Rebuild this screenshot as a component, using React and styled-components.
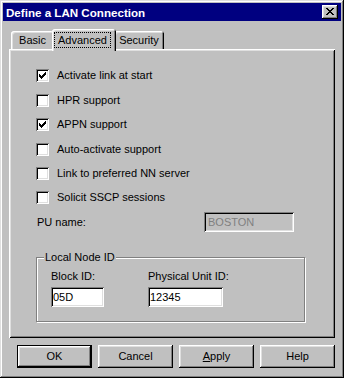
import React from "react";
import styled, { createGlobalStyle } from "styled-components";

const GlobalStyle = createGlobalStyle`
  html, body { margin: 0; padding: 0; background: #c0c0c0; }
  body {
    font-family: "Liberation Sans", Arial, sans-serif;
    font-size: 11px;
    color: #000;
  }
  * { box-sizing: border-box; }
`;

const Win = styled.div`
  width: 344px;
  height: 378px;
  padding: 3px;
  background: #c0c0c0;
  box-shadow: inset -1px -1px #000, inset 1px 1px #dfdfdf,
    inset -2px -2px #808080, inset 2px 2px #fff;
  display: flex;
  flex-direction: column;
`;

const TitleBar = styled.div`
  height: 18px;
  flex-shrink: 0;
  background: #000080;
  display: flex;
  align-items: center;
  padding: 0 3px 0 3px;
`;

const Title = styled.span`
  color: #fff;
  font-weight: bold;
  font-size: 11.6px;
  line-height: 13px;
  white-space: nowrap;
`;

const CloseBtn = styled.div`
  margin-left: auto;
  width: 16px;
  height: 14px;
  background: #c0c0c0;
  box-shadow: inset -1px -1px #000, inset 1px 1px #fff,
    inset -2px -2px #808080, inset 2px 2px #dfdfdf;
  display: flex;
  align-items: center;
  justify-content: center;
  padding: 0 1px 1px 0;
`;

const Body = styled.div`
  flex: 1;
  display: flex;
  flex-direction: column;
  padding: 8px 6px 7px 6px;
`;

const TabRow = styled.div`
  height: 20px;
  display: flex;
  align-items: flex-end;
  padding-left: 2px;
  position: relative;
  z-index: 1;
`;

const Tab = styled.div`
  width: ${(p) => p.$w}px;
  height: ${(p) => (p.$active ? 22 : 18)}px;
  margin: ${(p) => (p.$active ? "0 -2px -2px -2px" : "0")};
  background: #c0c0c0;
  border-radius: 3px 3px 0 0;
  box-shadow: inset 1px 1px #fff, inset -1px 0 #000, inset 2px 2px #dfdfdf,
    inset -2px 0 #808080;
  display: flex;
  justify-content: ${(p) => (p.$active ? "flex-start" : "center")};
  align-items: ${(p) => (p.$active ? "flex-start" : "center")};
  padding: ${(p) => (p.$active ? "3px 0 0 2px" : "0")};
  line-height: 13px;
  white-space: nowrap;
  position: relative;
  z-index: ${(p) => (p.$active ? 2 : 1)};
`;

const FocusBox = styled.span`
  width: 57px;
  height: 16px;
  outline: 1px dotted #000;
  outline-offset: -1px;
  display: flex;
  align-items: center;
  justify-content: center;
`;

const Panel = styled.div`
  height: 289px;
  flex-shrink: 0;
  background: #c0c0c0;
  box-shadow: inset 1px 1px #fff, inset -1px -1px #000,
    inset 2px 2px #dfdfdf, inset -2px -2px #808080;
  padding: 20px 0 0 27px;
  display: flex;
  flex-direction: column;
`;

const CheckList = styled.div`
  display: flex;
  flex-direction: column;
`;

const CheckRow = styled.div`
  display: flex;
  align-items: center;
  height: 13px;
  gap: 8px;
  margin-top: ${(p) => p.$mt}px;
`;

const Box = styled.div`
  width: 13px;
  height: 13px;
  flex-shrink: 0;
  background: #fff;
  box-shadow: inset 1px 1px #808080, inset -1px -1px #fff,
    inset 2px 2px #000, inset -2px -2px #dfdfdf;
  display: flex;
  align-items: center;
  justify-content: center;
`;

const Label = styled.span`
  line-height: 13px;
  white-space: nowrap;
`;

const PuRow = styled.div`
  display: flex;
  align-items: center;
  margin-top: 8px;
`;

const PuLabel = styled.span`
  width: 168px;
  padding-left: 1px;
  line-height: 13px;
`;

const Field = styled.div`
  width: ${(p) => p.$w}px;
  height: 20px;
  background: ${(p) => (p.$disabled ? "#c0c0c0" : "#fff")};
  color: ${(p) => (p.$disabled ? "#808080" : "#000")};
  box-shadow: inset 1px 1px #808080, inset -1px -1px #fff,
    inset 2px 2px #000, inset -2px -2px #dfdfdf;
  display: flex;
  align-items: center;
  padding: 0 2px 0 ${(p) => (p.$disabled ? 4 : 2)}px;
  line-height: 13px;
  white-space: nowrap;
`;

const Group = styled.div`
  position: relative;
  margin-top: 25px;
  width: 269px;
  height: 65px;
  border: 1px solid #808080;
  box-shadow: inset 1px 1px #fff, 1px 1px #fff;
  padding: 12px 0 0 14px;
  display: grid;
  grid-template-columns: 97px auto;
`;

const Legend = styled.span`
  position: absolute;
  top: -7px;
  left: 7px;
  padding: 0 1px;
  background: #c0c0c0;
  line-height: 13px;
  white-space: nowrap;
`;

const FieldCol = styled.div`
  display: flex;
  flex-direction: column;
  gap: 4px;
`;

const ButtonRow = styled.div`
  display: flex;
  justify-content: flex-end;
  gap: 6px;
  margin-top: 7px;
`;

const Button = styled.div`
  width: 75px;
  height: 23px;
  background: #c0c0c0;
  display: flex;
  align-items: center;
  justify-content: center;
  line-height: 13px;
  padding-bottom: 1px;
  box-shadow: ${(p) =>
    p.$default
      ? "inset 0 0 0 1px #000, inset -2px -2px #000, inset 2px 2px #fff, inset -3px -3px #808080, inset 3px 3px #dfdfdf"
      : "inset -1px -1px #000, inset 1px 1px #fff, inset -2px -2px #808080, inset 2px 2px #dfdfdf"};
`;

const CloseGlyph = () => (
  <svg width="8" height="7" viewBox="0 0 8 7" shapeRendering="crispEdges">
    <path
      fill="#000"
      d="M0 0h2v1H0zM6 0h2v1H6zM1 1h2v1H1zM5 1h2v1H5zM2 2h4v1H2zM3 3h2v1H3zM2 4h4v1H2zM1 5h2v1H1zM5 5h2v1H5zM0 6h2v1H0zM6 6h2v1H6z"
    />
  </svg>
);

const CheckGlyph = () => (
  <svg width="7" height="7" viewBox="0 0 7 7" shapeRendering="crispEdges">
    <path
      fill="#000"
      d="M6 0h1v1H6zM5 1h2v1H5zM0 2h1v1H0zM4 2h3v1H4zM0 3h2v1H0zM3 3h3v1H3zM0 4h5v1H0zM1 5h3v1H1zM2 6h1v1H2z"
    />
  </svg>
);

const options = [
  { label: "Activate link at start", checked: true, mt: 0 },
  { label: "HPR support", checked: false, mt: 12 },
  { label: "APPN support", checked: true, mt: 11 },
  { label: "Auto-activate support", checked: false, mt: 12 },
  { label: "Link to preferred NN server", checked: false, mt: 11 },
  { label: "Solicit SSCP sessions", checked: false, mt: 11 },
];

export default function App() {
  return (
    <>
      <GlobalStyle />
      <Win>
        <TitleBar>
          <Title>Define a LAN Connection</Title>
          <CloseBtn>
            <CloseGlyph />
          </CloseBtn>
        </TitleBar>
        <Body>
          <TabRow>
            <Tab $w={43}>Basic</Tab>
            <Tab $w={64} $active>
              <FocusBox>Advanced</FocusBox>
            </Tab>
            <Tab $w={50}>Security</Tab>
          </TabRow>
          <Panel>
            <CheckList>
              {options.map((o) => (
                <CheckRow key={o.label} $mt={o.mt}>
                  <Box>{o.checked && <CheckGlyph />}</Box>
                  <Label>{o.label}</Label>
                </CheckRow>
              ))}
            </CheckList>
            <PuRow>
              <PuLabel>PU name:</PuLabel>
              <Field $w={90} $disabled>
                BOSTON
              </Field>
            </PuRow>
            <Group>
              <Legend>Local Node ID</Legend>
              <FieldCol>
                <Label>Block ID:</Label>
                <Field $w={53}>05D</Field>
              </FieldCol>
              <FieldCol>
                <Label>Physical Unit ID:</Label>
                <Field $w={75}>12345</Field>
              </FieldCol>
            </Group>
          </Panel>
          <ButtonRow>
            <Button $default>OK</Button>
            <Button>Cancel</Button>
            <Button>
              <span>
                <u>A</u>pply
              </span>
            </Button>
            <Button>Help</Button>
          </ButtonRow>
        </Body>
      </Win>
    </>
  );
}
